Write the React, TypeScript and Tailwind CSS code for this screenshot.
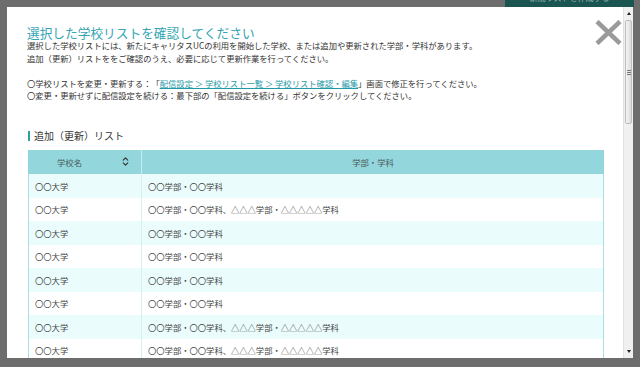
import { ChevronsUpDown } from 'lucide-react';
import React from 'react';

const rows: { school: string; dept: string }[] = [
    { school: '〇〇大学', dept: '〇〇学部・〇〇学科' },
    { school: '〇〇大学', dept: '〇〇学部・〇〇学科、△△△学部・△△△△△学科' },
    { school: '〇〇大学', dept: '〇〇学部・〇〇学科' },
    { school: '〇〇大学', dept: '〇〇学部・〇〇学科' },
    { school: '〇〇大学', dept: '〇〇学部・〇〇学科' },
    { school: '〇〇大学', dept: '〇〇学部・〇〇学科' },
    { school: '〇〇大学', dept: '〇〇学部・〇〇学科、△△△学部・△△△△△学科' },
    { school: '〇〇大学', dept: '〇〇学部・〇〇学科、△△△学部・△△△△△学科' },
    { school: '〇〇大学', dept: '〇〇学部・〇〇学科' },
];

// Fausse barre de défilement (style Windows classique)
const Scrollbar = () => (
    <div className="flex w-[10px] flex-col border-l border-[#e2e2e2] bg-[#f0f0f0] py-[2px]">
        <div className="flex h-[9px] items-center justify-center">
            <div className="h-0 w-0 border-x-[2.5px] border-b-[3px] border-x-transparent border-b-[#222]" />
        </div>
        <div className="mx-[1px] mt-[2px] flex h-[104px] flex-col items-center justify-center gap-[1px] rounded-[2px] border border-[#bdbdbd] bg-gradient-to-r from-[#f4f4f4] to-[#dcdcdc]">
            <div className="h-px w-[4px] bg-[#777]" />
            <div className="h-px w-[4px] bg-[#777]" />
            <div className="h-px w-[4px] bg-[#777]" />
        </div>
        <div className="flex-1" />
        <div className="flex h-[9px] items-center justify-center">
            <div className="h-0 w-0 border-x-[2.5px] border-t-[3px] border-x-transparent border-t-[#222]" />
        </div>
    </div>
);

const App = () => {
    return (
        <div className="relative h-[367px] w-[640px] overflow-hidden bg-[#6d6d6d] pl-[7px] pt-[7px] font-['Noto_Sans_CJK_JP',sans-serif] [text-spacing-trim:space-all]">
            {/* Bouton de la page en dessous */}
            <div className="absolute left-[505px] top-[-12px] flex h-[19px] w-[129px] items-center justify-center bg-[#1b5552] text-[8px] text-[#9fb9b6]">
                新規リストを作成する
            </div>

            <div className="relative flex h-[351px] w-[626px] bg-white">
                <div className="relative flex-1 overflow-hidden pl-[20px] pt-[19px]">
                    <h1 className="text-[12.7px] leading-[13px] text-[#34a5b3]">選択した学校リストを確認してください</h1>
                    <div className="text-[8.3px] leading-[12.5px] text-[#333]">
                        <p>選択した学校リストには、新たにキャリタスUCの利用を開始した学校、または追加や更新された学部・学科があります。</p>
                        <p>追加（更新）リストををご確認のうえ、必要に応じて更新作業を行ってください。</p>
                        <p>&nbsp;</p>
                        <p>
                            〇学校リストを変更・更新する：「
                            <span className="text-[#1f9aa8] underline">配信設定 ＞ 学校リスト一覧 ＞ 学校リスト確認・編集</span>
                            」画面で修正を行ってください。
                        </p>
                        <p>〇変更・更新せずに配信設定を続ける：最下部の「配信設定を続ける」ボタンをクリックしてください。</p>
                    </div>

                    {/* Titre de section */}
                    <div className="ml-px mt-[28.5px] flex items-center gap-[4px]">
                        <div className="h-[10px] w-[2px] bg-[#2a9fab]" />
                        <h2 className="text-[10px] leading-[12px] text-[#333]">追加（更新）リスト</h2>
                    </div>

                    {/* Tableau */}
                    <div className="ml-px mt-[8px] w-[576px] text-[8.3px] text-[#444]">
                        <div className="grid h-[24px] grid-cols-[114px_462px] bg-[#93d6dc] text-[#4a5c5d]">
                            <div className="relative flex items-center justify-center border-r border-[#c5ebee] pr-[30px]">
                                <span>学校名</span>
                                <ChevronsUpDown className="absolute right-[10px] top-[6px] h-[11px] w-[11px] text-[#333]" strokeWidth={2.5} />
                            </div>
                            <div className="flex items-center justify-center">学部・学科</div>
                        </div>
                        <div className="border-x border-[#a9dfe3]">
                            {rows.map((row, i) => (
                                <div
                                    key={i}
                                    className={`grid h-[23.5px] grid-cols-[113px_461px] ${i % 2 === 0 ? 'bg-[#ebfcfd]' : 'bg-white'}`}
                                >
                                    <div className="flex items-center border-r border-[#d3f0f3] pl-[6px]">{row.school}</div>
                                    <div className="flex items-center pl-[6px]">{row.dept}</div>
                                </div>
                            ))}
                        </div>
                    </div>

                    {/* Bouton fermer */}
                    <button className="absolute right-[1px] top-[13px] cursor-pointer">
                        <svg width="27" height="25" viewBox="0 0 27 25">
                            <line x1="2" y1="1.5" x2="25" y2="23.5" stroke="#9a9a9a" strokeWidth="4.5" />
                            <line x1="25" y1="1.5" x2="2" y2="23.5" stroke="#9a9a9a" strokeWidth="4.5" />
                        </svg>
                    </button>
                </div>
                <Scrollbar />
            </div>
        </div>
    );
};

export default App;
